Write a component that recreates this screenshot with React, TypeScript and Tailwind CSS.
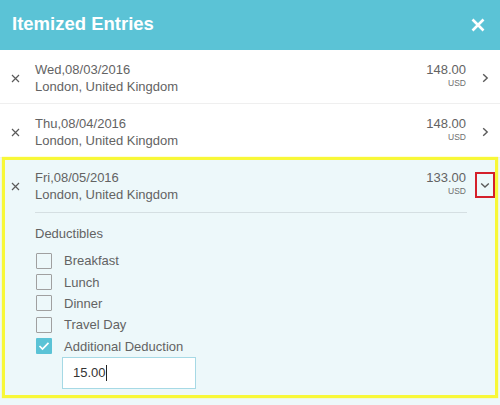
import React from "react";

const font = { fontFamily: '"Liberation Sans", Arial, sans-serif' };

function SmallX() {
  return (
    <svg width="9" height="9" viewBox="0 0 9 9">
      <path d="M1 1 L8 8 M8 1 L1 8" stroke="#5a5a5a" strokeWidth="1.2" fill="none" />
    </svg>
  );
}

function ChevronRight() {
  return (
    <svg width="7" height="10" viewBox="0 0 7 10">
      <path d="M1.2 1.2 L5.2 5 L1.2 8.8" stroke="#5a5a5a" strokeWidth="1.4" fill="none" />
    </svg>
  );
}

function ChevronDown() {
  return (
    <svg width="10" height="7" viewBox="0 0 10 7">
      <path d="M1.2 1.5 L5 5 L8.8 1.5" stroke="#5a5a5a" strokeWidth="1.4" fill="none" />
    </svg>
  );
}

function Amount({ value }: { value: string }) {
  return (
    <div className="flex flex-col items-end">
      <div className="text-[13px] leading-[17px] text-[#636363]">{value}</div>
      <div className="text-[8.5px] leading-[9px] text-[#707070] mt-[1px]">USD</div>
    </div>
  );
}

function DateBlock({ date }: { date: string }) {
  return (
    <div className="flex flex-col text-[13px] leading-[17px] text-[#636363]">
      <div>{date}</div>
      <div>London, United Kingdom</div>
    </div>
  );
}

function Row({ date, value }: { date: string; value: string }) {
  return (
    <div className="flex h-[54px] items-start pt-[11px] border-b border-[#efefef] bg-white">
      <div className="w-[35px] h-[34px] flex items-center pl-[11px]">
        <SmallX />
      </div>
      <div className="flex-1">
        <DateBlock date={date} />
      </div>
      <Amount value={value} />
      <div className="w-[34px] h-[34px] flex items-center pl-[16px]">
        <ChevronRight />
      </div>
    </div>
  );
}

function CheckRow({ label, checked }: { label: string; checked?: boolean }) {
  return (
    <div className="flex items-center h-[21.4px]">
      {checked ? (
        <div className="w-[16px] h-[16px] ml-[1px] rounded-[1px] bg-[#5bc3d6] flex items-center justify-center">
          <svg width="12" height="10" viewBox="0 0 12 10">
            <path d="M1.5 5 L4.5 8 L10.5 1.8" stroke="#fff" strokeWidth="1.7" fill="none" />
          </svg>
        </div>
      ) : (
        <div className="w-[16px] h-[16px] ml-[1px] rounded-[1px] border-[1.5px] border-[#a0a0a0] bg-transparent" />
      )}
      <span className="ml-[12px] text-[13px] leading-[17px] text-[#636363]">{label}</span>
    </div>
  );
}

export default function App() {
  return (
    <div className="w-[500px] h-[405px] overflow-hidden bg-[#edf8fa]" style={font}>
      <div className="h-[50px] bg-[#5bc3d6] flex items-center justify-between pl-[12px] pr-[15px]">
        <span className="text-white text-[18.5px] font-bold leading-none pb-[1px]">Itemized Entries</span>
        <svg width="14" height="14" viewBox="0 0 14 14">
          <path d="M1.5 1.5 L12.5 12.5 M12.5 1.5 L1.5 12.5" stroke="#fff" strokeWidth="2.6" fill="none" />
        </svg>
      </div>
      <Row date="Wed,08/03/2016" value="148.00" />
      <Row date="Thu,08/04/2016" value="148.00" />
      <div className="relative bg-[#edf8fa] pt-[11px] pb-[20px]">
        <div className="flex items-start">
          <div className="w-[35px] h-[34px] flex items-center pl-[11px]">
            <SmallX />
          </div>
          <div className="flex-1 flex flex-col">
            <div className="flex items-start justify-between">
              <DateBlock date="Fri,08/05/2016" />
              <Amount value="133.00" />
            </div>
            <div className="mt-[9px] h-px bg-[#d5dfe2] mr-[-1px]" />
            <div className="mt-[12px] text-[13px] leading-[17px] text-[#636363]">Deductibles</div>
            <div className="mt-[8px] flex flex-col">
              <CheckRow label="Breakfast" />
              <CheckRow label="Lunch" />
              <CheckRow label="Dinner" />
              <CheckRow label="Travel Day" />
              <CheckRow label="Additional Deduction" checked />
            </div>
            <div className="ml-[27px] w-[134px] h-[32px] border border-[#a6d9e5] bg-white flex items-center pl-[10px] text-[13px] text-[#333]">
              <span>15.00</span>
              <span className="inline-block w-px h-[16px] bg-[#222]" />
            </div>
          </div>
          <div className="w-[34px] flex pl-[9px] pt-[3px]">
            <div className="w-[20px] h-[26px] border-2 border-[#d4202a] flex items-center justify-center">
              <ChevronDown />
            </div>
          </div>
        </div>
        <div className="absolute left-[2px] right-[2px] top-[-1px] h-[241px] border-[3px] border-[#f8f838] shadow-[0_0_1px_#f8f838] pointer-events-none" />
      </div>
    </div>
  );
}
